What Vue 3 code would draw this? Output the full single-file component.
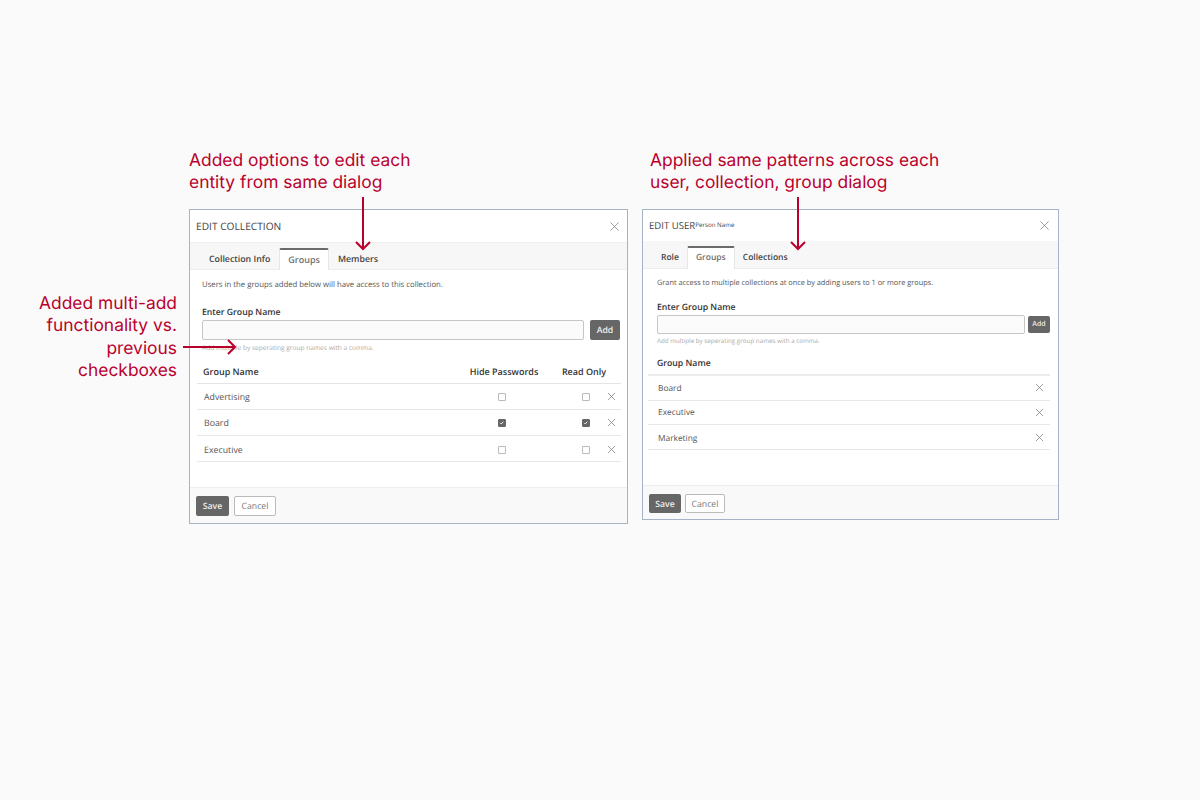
<script setup>
const collectionRows = [
  { name: 'Advertising', hide: false, read: false },
  { name: 'Board', hide: true, read: true },
  { name: 'Executive', hide: false, read: false }
]
const userRows = ['Board', 'Executive', 'Marketing']
</script>

<template>
  <main class="page">
    <p class="note side-note">Added multi-add functionality vs. previous checkboxes</p>
    <svg class="arrows" width="1200" height="800" viewBox="0 0 1200 800" fill="none" stroke="#b9002c" stroke-width="2">
      <path d="M363 197V249M356 242l7 7 7-7" />
      <path d="M798 197V249M791 242l7 7 7-7" />
      <path d="M183 347H235M228 340l7 7-7 7" />
    </svg>

    <section class="column col-a">
      <p class="note top-note">Added options to edit each entity from same dialog</p>
      <div class="dialog dialog-a">
        <header class="head">
          <h2>EDIT COLLECTION</h2>
          <svg class="x close" viewBox="0 0 10 10"><path d="M.5.5l9 9M9.5.5l-9 9" /></svg>
        </header>
        <nav class="tabs">
          <span class="tab">Collection Info</span>
          <span class="tab active">Groups</span>
          <span class="tab">Members</span>
        </nav>
        <div class="body">
          <p class="intro">Users in the groups added below will have access to this collection.</p>
          <label class="label">Enter Group Name</label>
          <div class="field">
            <div class="input"></div>
            <span class="btn add">Add</span>
          </div>
          <p class="hint">Add multiple by seperating group names with a comma.</p>
          <div class="thead">
            <span class="c-name">Group Name</span>
            <span class="c-hide">Hide Passwords</span>
            <span class="c-read">Read Only</span>
            <span class="c-x"></span>
          </div>
          <div v-for="row in collectionRows" :key="row.name" class="row">
            <span class="c-name cell">{{ row.name }}</span>
            <span class="c-hide"><i class="check" :class="{ on: row.hide }"><svg v-if="row.hide" viewBox="0 0 8 8"><path d="M1.8 4.2l1.5 1.6 3-3.4" /></svg></i></span>
            <span class="c-read"><i class="check" :class="{ on: row.read }"><svg v-if="row.read" viewBox="0 0 8 8"><path d="M1.8 4.2l1.5 1.6 3-3.4" /></svg></i></span>
            <span class="c-x"><svg class="x" viewBox="0 0 10 10"><path d="M1 1l8 8M9 1L1 9" /></svg></span>
          </div>
        </div>
        <footer class="foot">
          <span class="btn save">Save</span>
          <span class="btn cancel">Cancel</span>
        </footer>
      </div>
    </section>

    <section class="column col-b">
      <p class="note top-note">Applied same patterns across each user, collection, group dialog</p>
      <div class="dialog dialog-b">
        <header class="head">
          <h2>EDIT USER</h2><span class="person">Person Name</span>
          <svg class="x close" viewBox="0 0 10 10"><path d="M.5.5l9 9M9.5.5l-9 9" /></svg>
        </header>
        <nav class="tabs">
          <span class="tab">Role</span>
          <span class="tab active">Groups</span>
          <span class="tab">Collections</span>
        </nav>
        <div class="body">
          <p class="intro">Grant access to multiple collections at once by adding users to 1 or more groups.</p>
          <label class="label">Enter Group Name</label>
          <div class="field">
            <div class="input"></div>
            <span class="btn add">Add</span>
          </div>
          <p class="hint">Add multiple by seperating group names with a comma.</p>
          <div class="thead">
            <span class="c-name">Group Name</span>
          </div>
          <div v-for="name in userRows" :key="name" class="row">
            <span class="c-name cell">{{ name }}</span>
            <span class="c-x"><svg class="x" viewBox="0 0 10 10"><path d="M1 1l8 8M9 1L1 9" /></svg></span>
          </div>
        </div>
        <footer class="foot">
          <span class="btn save">Save</span>
          <span class="btn cancel">Cancel</span>
        </footer>
      </div>
    </section>
  </main>
</template>

<style>
html, body { margin: 0; background: #fafafa; }
</style>

<style scoped>
.page {
  position: relative;
  width: 1200px;
  height: 800px;
  box-sizing: border-box;
  padding: 150px 0 0 189px;
  display: flex;
  gap: 14px;
  align-items: flex-start;
  background: #fafafa;
  overflow: hidden;
  font-family: "Open Sans", sans-serif;
  text-rendering: geometricPrecision;
  color: #333;
}
.arrows { position: absolute; left: 0; top: 0; z-index: 2; pointer-events: none; }
.note {
  margin: 0;
  font-family: "Inter", sans-serif;
  font-size: 17.4px;
  line-height: 22.3px;
  font-weight: 400;
  color: #b9002c;
}
.side-note { position: absolute; left: 20px; top: 293px; width: 157px; text-align: right; }
.top-note { height: 59px; box-sizing: border-box; }
.col-a .top-note { width: 240px; }
.col-b .top-note { width: 300px; margin-left: 8px; }
.column { display: flex; flex-direction: column; }

.dialog {
  box-sizing: border-box;
  display: flex;
  flex-direction: column;
  background: #fff;
  border: 1px solid #a6b2c6;
}
.dialog-a { width: 439px; height: 315px; }
.dialog-b { width: 417px; height: 311px; }

.head {
  display: flex;
  align-items: center;
  padding: 0 9px 0 6px;
  border-bottom: 1px solid #f0f0f0;
  color: #444;
}
.dialog-a .head { height: 32px; padding-right: 8.5px; }
.dialog-b .head { height: 31px; border-bottom: 0; }
h2 { margin: 0; font-weight: 400; }
.dialog-a h2 { font-size: 10.2px; }
.dialog-b h2 { font-size: 9.6px; }
.person { font-size: 6.2px; margin: -2px 0 0 0; color: #444; }
.close { margin-left: auto; width: 9px; height: 9px; }
.x { display: block; width: 9px; height: 9px; fill: none; stroke: #777; stroke-width: .8; }

.tabs {
  display: flex;
  background: #f7f7f7;
  border-bottom: 1px solid #ececec;
  font-size: 8.8px;
  font-weight: 600;
  color: #444;
  padding-left: 10px;
}
.dialog-a .tabs { height: 26px; }
.dialog-b .tabs { height: 27px; padding-left: 9px; font-size: 8.5px; }
.tab {
  display: flex;
  align-items: center;
  justify-content: center;
  box-sizing: border-box;
  margin-top: 5px;
  margin-bottom: -1px;
}
.dialog-a .tab { padding-left: 9px; padding-right: 9px; }
.dialog-b .tab { padding-left: 9px; padding-right: 8px; }
.dialog-a .tab.active { padding-left: 8px; padding-right: 8px; font-size: 9px; }
.dialog-b .tab.active { padding-left: 8px; padding-right: 8px; }
.dialog-b .tab:last-child { padding-left: 8px; }
.tab.active {
  background: #fff;
  border-top: 2px solid #6b6b6b;
  border-left: 1px solid #e6e6e6;
  border-right: 1px solid #e6e6e6;
  border-radius: 2px 2px 0 0;
  color: #707070;
  padding-bottom: 2px;
}

.body { flex: 1; min-height: 0; }
.dialog-a .body { padding: 0 6px 0 7px; }
.dialog-b .body { padding: 0 8px 0 5px; }
.intro { margin: 0; line-height: 11px; color: #555; }
.dialog-a .intro { padding: 10px 0 0 5px; font-size: 7.75px; }
.dialog-b .intro { padding: 9px 0 0 9px; font-size: 7.35px; }
.label { display: block; font-size: 8.7px; font-weight: 600; line-height: 12px; color: #333; }
.dialog-a .label { margin: 15px 0 0 5px; }
.dialog-b .label { margin: 12px 0 0 9px; }
.field { display: flex; }
.dialog-a .field { margin: 2px 1px 0 5px; gap: 6px; height: 20px; }
.dialog-b .field { margin: 2px 0 0 9px; gap: 3px; height: 19px; align-items: center; }
.input {
  flex: 1;
  align-self: stretch;
  box-sizing: border-box;
  background: #fbfbfb;
  border: 1px solid #c6c6c6;
  border-radius: 2px;
}
.btn {
  display: flex;
  align-items: center;
  justify-content: center;
  box-sizing: border-box;
  border-radius: 2px;
  font-weight: 600;
}
.add, .save { background: #666; color: #eee; }
.dialog-a .add { width: 30px; font-size: 8.7px; }
.dialog-b .add { width: 22px; height: 17px; font-size: 7px; }
.hint { margin: 0; line-height: 9px; color: #aaa; }
.dialog-a .hint { padding: 3px 0 0 5px; font-size: 6.6px; }
.dialog-b .hint { padding: 2px 0 0 9px; font-size: 6.25px; }

.thead, .row { display: flex; align-items: center; box-sizing: border-box; }
.thead { font-weight: 600; color: #333; border-bottom: 1px solid #e4e4e4; }
.dialog-a .thead { height: 25px; margin-top: 7px; padding-left: 6px; font-size: 9px; }
.dialog-b .thead { height: 27px; margin-top: 4px; padding: 3px 0 0 9px; font-size: 8.7px; border-bottom-width: 2px; border-bottom-color: #ececec; }
.row { border-bottom: 1px solid #e8e8e8; color: #555; }
.dialog-a .row { height: 26px; padding-left: 7px; font-size: 8.8px; }
.dialog-a .row:last-child { padding-top: 2px; }
.dialog-b .row { height: 24.6px; padding: 1px 0 0 10px; font-size: 8.35px; }
.dialog-b .row:last-child { padding-top: 3px; }
.cell { font-weight: 400; }
.c-name { flex: 1; }
.c-hide, .c-read, .c-x { display: flex; justify-content: center; }
.thead .c-hide { width: 70px; margin-right: 22px; }
.thead .c-read { width: 46px; }
.thead .c-x { width: 14px; }
.row .c-hide { width: 40px; margin-right: 49px; }
.row .c-read { width: 30px; }
.row .c-x { width: 20px; }
.dialog-b .row .c-x { width: 21px; margin-top: -1px; }
.check {
  display: block;
  box-sizing: border-box;
  width: 7.5px;
  height: 7.5px;
  margin-top: 1px;
  border: 1px solid #b9b9b9;
  border-radius: 1px;
  background: #fff;
}
.check.on { background: #666; border-color: #666; }
.check svg { display: block; width: 5.5px; height: 5.5px; fill: none; stroke: #fff; stroke-width: 1.3; }

.foot {
  display: flex;
  align-items: center;
  box-sizing: border-box;
  background: #f9f9f9;
  border-top: 1px solid #eeeeee;
  font-size: 8.7px;
}
.dialog-a .foot { height: 36px; padding: 1px 6px 0; gap: 5px; }
.dialog-b .foot { height: 34px; padding: 2px 6px 0; gap: 4px; }
.dialog-a .save { width: 33px; height: 20px; }
.dialog-a .cancel { width: 42px; height: 20px; }
.dialog-b .save { width: 32px; height: 19px; }
.dialog-b .cancel { width: 40px; height: 19px; }
.cancel { background: #fff; border: 1px solid #bbb; color: #777; font-weight: 400; }
</style>
